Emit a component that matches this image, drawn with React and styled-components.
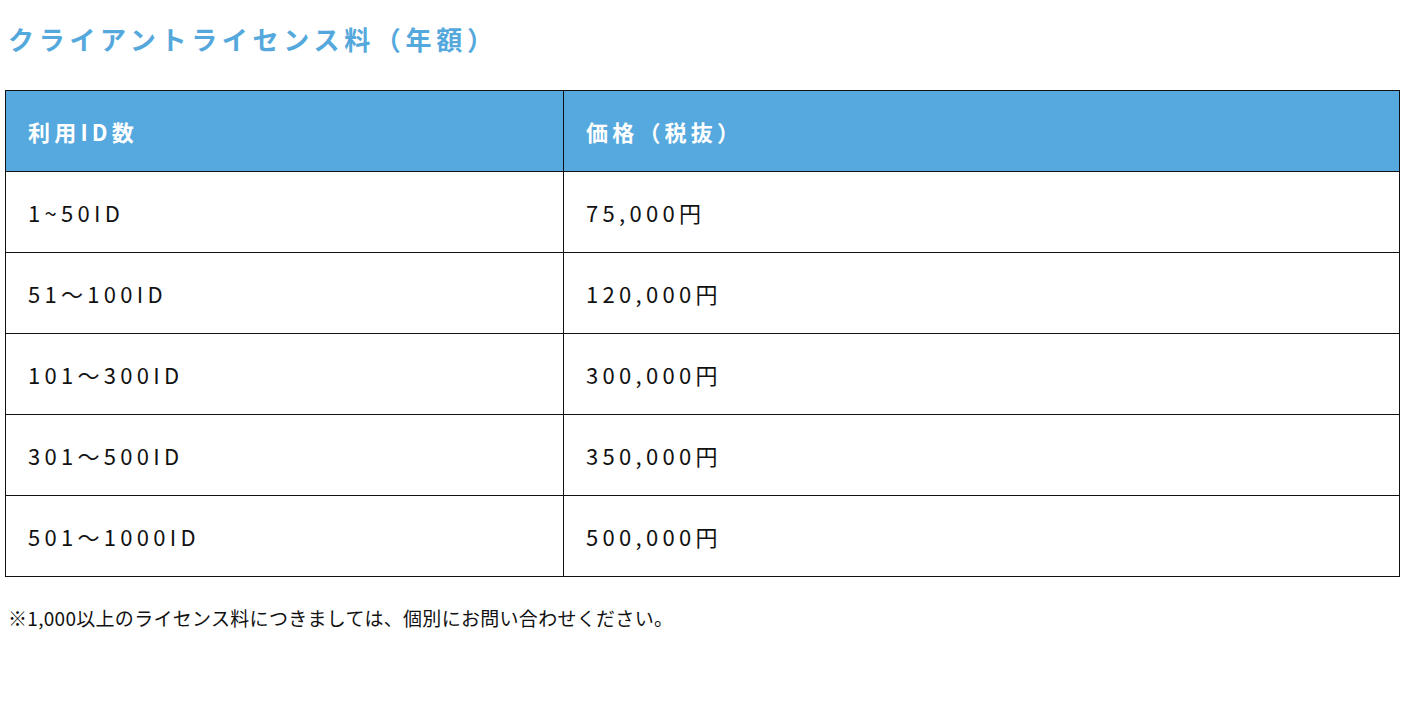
import React from "react";
import styled, { createGlobalStyle } from "styled-components";

const GlobalStyle = createGlobalStyle`
  body {
    margin: 0;
    background: #fff;
    font-family: "Noto Sans CJK JP", "Noto Sans", sans-serif;
    color: #111;
  }
`;

const Page = styled.div`
  padding: 20px 10px 0 5px;
`;

const Title = styled.h2`
  margin: 0 0 32px 3px;
  font-size: 26px;
  line-height: 38px;
  font-weight: 700;
  letter-spacing: 4.7px;
  color: #55a8dc;
`;

const Table = styled.table`
  width: 1395px;
  border-collapse: collapse;
  table-layout: fixed;
`;

const HeadCell = styled.th`
  height: 80px;
  padding: 0 22px;
  text-align: left;
  font-size: 22px;
  font-weight: 700;
  letter-spacing: 4.2px;
  color: #fff;
  background: #56a9de;
  border: 1px solid #111;
  width: ${(p) => p.$width || "auto"};
`;

const Cell = styled.td`
  height: 80px;
  padding: 0 22px;
  font-size: 22px;
  letter-spacing: 4.3px;
  border: 1px solid #111;
`;

const Note = styled.p`
  margin: 27px 0 0 3px;
  font-size: 19px;
  letter-spacing: 0.3px;
  color: #111;
`;

const ROWS = [
  { ids: "1~50ID", price: "75,000円" },
  { ids: "51～100ID", price: "120,000円" },
  { ids: "101～300ID", price: "300,000円" },
  { ids: "301～500ID", price: "350,000円" },
  { ids: "501～1000ID", price: "500,000円" },
];

const App = () => {
  return (
    <>
      <GlobalStyle />
      <Page>
        <Title>クライアントライセンス料（年額）</Title>
        <Table>
          <thead>
            <tr>
              <HeadCell $width="513px">利用ID数</HeadCell>
              <HeadCell>価格（税抜）</HeadCell>
            </tr>
          </thead>
          <tbody>
            {ROWS.map((row) => (
              <tr key={row.ids}>
                <Cell>{row.ids}</Cell>
                <Cell>{row.price}</Cell>
              </tr>
            ))}
          </tbody>
        </Table>
        <Note>※1,000以上のライセンス料につきましては、個別にお問い合わせください。</Note>
      </Page>
    </>
  );
};

export default App;
